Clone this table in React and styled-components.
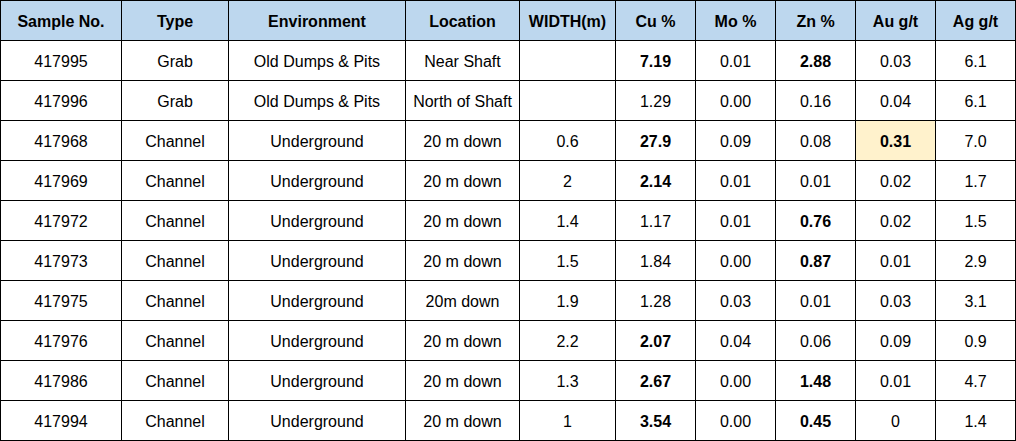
import React from "react";
import styled, { createGlobalStyle } from "styled-components";

const columns = [
  "Sample No.",
  "Type",
  "Environment",
  "Location",
  "WIDTH(m)",
  "Cu %",
  "Mo %",
  "Zn %",
  "Au g/t",
  "Ag g/t",
];

// b: indexes of bold cells, h: index of highlighted cell
const samples = [
  { cells: ["417995", "Grab", "Old Dumps & Pits", "Near Shaft", "", "7.19", "0.01", "2.88", "0.03", "6.1"], b: [5, 7] },
  { cells: ["417996", "Grab", "Old Dumps & Pits", "North of Shaft", "", "1.29", "0.00", "0.16", "0.04", "6.1"], b: [] },
  { cells: ["417968", "Channel", "Underground", "20 m down", "0.6", "27.9", "0.09", "0.08", "0.31", "7.0"], b: [5, 8], h: 8 },
  { cells: ["417969", "Channel", "Underground", "20 m down", "2", "2.14", "0.01", "0.01", "0.02", "1.7"], b: [5] },
  { cells: ["417972", "Channel", "Underground", "20 m down", "1.4", "1.17", "0.01", "0.76", "0.02", "1.5"], b: [7] },
  { cells: ["417973", "Channel", "Underground", "20 m down", "1.5", "1.84", "0.00", "0.87", "0.01", "2.9"], b: [7] },
  { cells: ["417975", "Channel", "Underground", "20m down", "1.9", "1.28", "0.03", "0.01", "0.03", "3.1"], b: [] },
  { cells: ["417976", "Channel", "Underground", "20 m down", "2.2", "2.07", "0.04", "0.06", "0.09", "0.9"], b: [5] },
  { cells: ["417986", "Channel", "Underground", "20 m down", "1.3", "2.67", "0.00", "1.48", "0.01", "4.7"], b: [5, 7] },
  { cells: ["417994", "Channel", "Underground", "20 m down", "1", "3.54", "0.00", "0.45", "0", "1.4"], b: [5, 7] },
];

const GlobalStyle = createGlobalStyle`
  html, body {
    margin: 0;
    padding: 0;
    background: #ffffff;
  }
`;

const Table = styled.div`
  display: grid;
  grid-template-columns: 120px 106px 176px 113px 95px 79px 79px 79px 79px 79px;
  grid-auto-rows: 39px;
  gap: 1px;
  padding: 1px;
  width: 1016px;
  box-sizing: border-box;
  background: #000000;
  font-family: "Liberation Sans", Arial, sans-serif;
  font-size: 16px;
  color: #000000;
`;

const HeaderCell = styled.div`
  display: flex;
  align-items: center;
  justify-content: center;
  padding-top: 2px;
  box-sizing: border-box;
  background: #bdd7ee;
  font-weight: bold;
`;

const Cell = styled.div`
  display: flex;
  align-items: center;
  justify-content: center;
  padding-top: 2px;
  box-sizing: border-box;
  white-space: nowrap;
  background: ${(props) => (props.highlight ? "#fff2cc" : "#ffffff")};
  font-weight: ${(props) => (props.bold ? "bold" : "normal")};
`;

const App = () => {
  return (
    <>
      <GlobalStyle />
      <Table>
        {columns.map((col) => (
          <HeaderCell key={col}>{col}</HeaderCell>
        ))}
        {samples.map((row) =>
          row.cells.map((value, i) => (
            <Cell
              key={row.cells[0] + "-" + i}
              bold={row.b.includes(i)}
              highlight={row.h === i}
            >
              {value}
            </Cell>
          ))
        )}
      </Table>
    </>
  );
};

export default App;
